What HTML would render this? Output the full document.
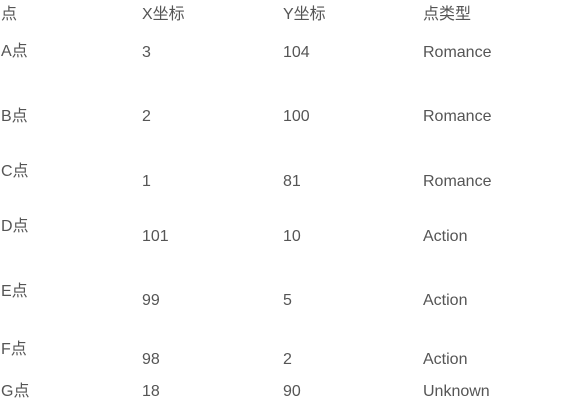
<!DOCTYPE html>
<html><head><meta charset="utf-8"><style>
html,body{margin:0;padding:0;background:#fff;width:565px;height:404px;overflow:hidden}
body{position:relative;font-family:"Liberation Sans","Noto Sans CJK SC",sans-serif;font-size:16px;color:#555}
div{position:absolute;line-height:16px;white-space:nowrap}
</style></head><body>
<div style="left:1px;top:7px">点</div>
<div style="left:142px;top:7px">X坐标</div>
<div style="left:283px;top:7px">Y坐标</div>
<div style="left:423px;top:7px">点类型</div>

<div style="left:1px;top:44px">A点</div>
<div style="left:142px;top:45px">3</div>
<div style="left:283px;top:45px">104</div>
<div style="left:423px;top:45px">Romance</div>

<div style="left:1px;top:109px">B点</div>
<div style="left:142px;top:109px">2</div>
<div style="left:283px;top:109px">100</div>
<div style="left:423px;top:109px">Romance</div>

<div style="left:1px;top:164px">C点</div>
<div style="left:142px;top:174px">1</div>
<div style="left:283px;top:174px">81</div>
<div style="left:423px;top:174px">Romance</div>

<div style="left:1px;top:219px">D点</div>
<div style="left:142px;top:229px">101</div>
<div style="left:283px;top:229px">10</div>
<div style="left:423px;top:229px">Action</div>

<div style="left:1px;top:284px">E点</div>
<div style="left:142px;top:293px">99</div>
<div style="left:283px;top:293px">5</div>
<div style="left:423px;top:293px">Action</div>

<div style="left:1px;top:342px">F点</div>
<div style="left:142px;top:352px">98</div>
<div style="left:283px;top:352px">2</div>
<div style="left:423px;top:352px">Action</div>

<div style="left:1px;top:384px">G点</div>
<div style="left:142px;top:384px">18</div>
<div style="left:283px;top:384px">90</div>
<div style="left:423px;top:384px">Unknown</div>
</body></html>
